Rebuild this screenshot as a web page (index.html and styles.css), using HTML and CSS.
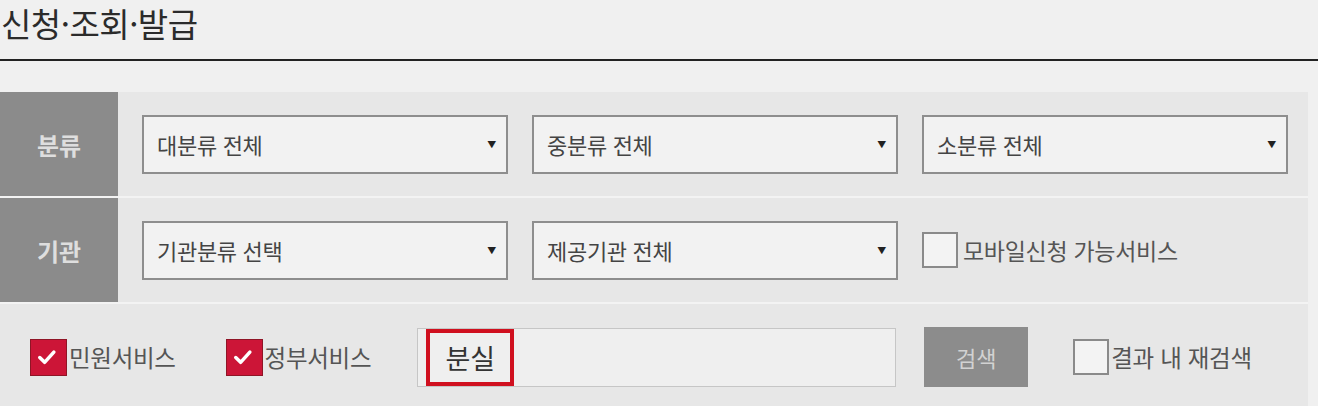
FILE: index.html
```html
<!DOCTYPE html>
<html lang="ko">
<head>
  <meta charset="UTF-8">
  <title>신청·조회·발급</title>
  <link rel="stylesheet" href="styles.css">
</head>
<body>
  <h1 class="page-title">신청·조회·발급</h1>

  <div class="search-panel">
    <div class="filter-row">
      <div class="row-label">분류</div>
      <div class="row-fields">
        <div class="select-box"><span>대분류 전체</span><span class="select-arrow">▼</span></div>
        <div class="select-box"><span>중분류 전체</span><span class="select-arrow">▼</span></div>
        <div class="select-box"><span>소분류 전체</span><span class="select-arrow">▼</span></div>
      </div>
    </div>

    <div class="filter-row">
      <div class="row-label">기관</div>
      <div class="row-fields">
        <div class="select-box"><span>기관분류 선택</span><span class="select-arrow">▼</span></div>
        <div class="select-box"><span>제공기관 전체</span><span class="select-arrow">▼</span></div>
        <label class="check"><span class="check-box"></span>모바일신청 가능서비스</label>
      </div>
    </div>

    <div class="filter-row keyword-row">
      <label class="check check-first">
        <span class="check-box is-checked">
          <svg width="36" height="36" viewBox="0 0 36 36"><polyline points="9,18.5 14,23.5 23.5,13" fill="none" stroke="#fff" stroke-width="3.6" stroke-linecap="round" stroke-linejoin="round"/></svg>
        </span>민원서비스
      </label>
      <label class="check check-second">
        <span class="check-box is-checked">
          <svg width="36" height="36" viewBox="0 0 36 36"><polyline points="9,18.5 14,23.5 23.5,13" fill="none" stroke="#fff" stroke-width="3.6" stroke-linecap="round" stroke-linejoin="round"/></svg>
        </span>정부서비스
      </label>
      <div class="keyword-input">
        <span class="keyword-mark">분실</span>
      </div>
      <button class="search-btn" type="button">검색</button>
      <label class="check check-research"><span class="check-box"></span>결과 내 재검색</label>
    </div>
  </div>
</body>
</html>
```

FILE: styles.css
```css
body {
  margin: 0;
  background: #f0f0f0;
  color: #333;
  font-family: "Noto Sans CJK KR", "Noto Sans", sans-serif;
  overflow: hidden;
}

/* --- title --- */
.page-title {
  margin: 0 0 31px 0;
  height: 61px;
  padding-left: 1px;
  border-bottom: 2px solid #222;
  box-sizing: border-box;
  font-size: 33px;
  font-weight: normal;
  line-height: 46px;
  color: #2b2b2b;
  letter-spacing: -0.5px;
}

/* --- panel --- */
.search-panel {
  width: 1308px;
  background: #e7e7e7;
}
.filter-row {
  display: flex;
  height: 104px;
}
.filter-row + .filter-row {
  border-top: 2px solid #f3f3f3;
}
.row-label {
  width: 118px;
  flex: none;
  background: #8b8b8b;
  color: #dedede;
  font-size: 24px;
  font-weight: bold;
  display: flex;
  align-items: center;
  justify-content: center;
}
.row-fields {
  display: flex;
  align-items: center;
  gap: 24px;
  padding-left: 24px;
}

.select-box {
  width: 366px;
  height: 59px;
  box-sizing: border-box;
  border: 2px solid #8e8e8e;
  background: #f2f2f2;
  display: flex;
  align-items: center;
  justify-content: space-between;
  padding: 0 10px 0 13px;
  font-size: 22px;
  color: #444;
  letter-spacing: -0.3px;
}
.select-arrow {
  font-size: 9px;
  color: #222;
}

/* --- checkboxes --- */
.check {
  display: flex;
  align-items: center;
  gap: 5px;
  font-size: 23px;
  color: #555;
  letter-spacing: -0.3px;
}
.check-box {
  width: 36px;
  height: 36px;
  box-sizing: border-box;
  border: 2px solid #8a8a8a;
  background: #f3f3f3;
  flex: none;
}
.check-box.is-checked {
  width: 37px;
  height: 37px;
  border: 1px solid #8f1526;
  background: #cc1537;
  display: flex;
  align-items: center;
  justify-content: center;
}

/* --- keyword row --- */
.keyword-row {
  height: 106px;
  align-items: center;
  padding-left: 30px;
}
.keyword-row .check { gap: 2px; font-size: 23.5px; }
.check-first { margin-right: 50px; }
.check-second { margin-right: 46px; }

.keyword-input {
  width: 479px;
  height: 59px;
  box-sizing: border-box;
  border: 1px solid #c6c6c6;
  background: #efefef;
  padding-left: 8px;
  display: flex;
}
.keyword-mark {
  width: 88px;
  box-sizing: border-box;
  border: 4px solid #d0101f;
  display: flex;
  align-items: center;
  justify-content: center;
  font-size: 27px;
  color: #333;
}

.search-btn {
  margin-left: 28px;
  width: 104px;
  height: 60px;
  border: none;
  background: #8c8c8c;
  color: #d2d2d2;
  font-family: inherit;
  font-size: 22px;
  padding: 0;
}
.check-research { margin-left: 45px; }
```
